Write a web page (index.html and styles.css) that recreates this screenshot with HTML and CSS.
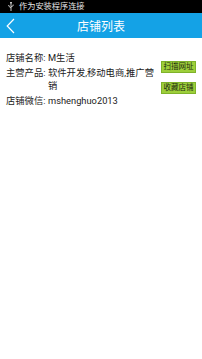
FILE: index.html
```html
<!DOCTYPE html>
<html>
<head>
<meta charset="utf-8">
<link rel="stylesheet" href="styles.css">
</head>
<body>
<div class="status">
  <svg class="usb" width="6" height="9" viewBox="0 0 6 9"><path d="M3 0 L3 9 M3 6 L0.8 4.2 L0.8 3 M3 5 L5.2 3.6 L5.2 2.6" stroke="#ddd" stroke-width="0.9" fill="none"/><rect x="2.2" y="0" width="1.6" height="1.4" fill="#ddd"/></svg>
  <span class="status-text">作为安装程序连接</span>
</div>
<div class="header">
  <svg class="back" width="9" height="16" viewBox="0 0 9 16"><path d="M8 1 L1.2 8 L8 15" stroke="#fff" stroke-width="1.2" fill="none"/></svg>
  <span class="title">店铺列表</span>
</div>
<div class="content">
  <div class="info">
    <div class="row"><span class="label">店铺名称:</span><span class="value">M生活</span></div>
    <div class="row"><span class="label">主营产品:</span><span class="value">软件开发,移动电商,推广营销</span></div>
    <div class="row"><span class="label">店铺微信:</span><span class="value">mshenghuo2013</span></div>
  </div>
  <div class="actions">
    <span class="btn">扫描网址</span>
    <span class="btn">收藏店铺</span>
  </div>
</div>
</body>
</html>
```
FILE: styles.css
```css
html, body { margin: 0; padding: 0; background: #fff; }
body { font-family: "Roboto", "Noto Sans CJK SC", sans-serif; width: 202px; height: 359px; }
.status { height: 13px; background: #000; display: flex; align-items: center; padding-left: 8px; gap: 5px; }
.usb { display: block; }
.status-text { color: #e6e6e6; font-size: 8.2px; line-height: 13px; }
.header { height: 25px; background: #14a2e6; position: relative; display: flex; align-items: center; justify-content: center; }
.back { position: absolute; left: 6px; top: 5px; }
.title { color: #fff; font-size: 12px; }
.content { display: flex; padding: 12.5px 6px 0 6px; gap: 5px; }
.info { width: 150px; font-size: 9.3px; color: #222; line-height: 13px; }
.row { display: flex; margin-bottom: 2px; }
.label { width: 42px; flex: none; }
.value { width: 108px; }
.actions { width: 35px; display: flex; flex-direction: column; gap: 8.5px; padding-top: 10.5px; }
.btn { display: block; background: #9dcf3a; color: #1d2a10; font-size: 7.5px; line-height: 10px; text-align: center; border: 0.5px solid #7fb22a; }
```
